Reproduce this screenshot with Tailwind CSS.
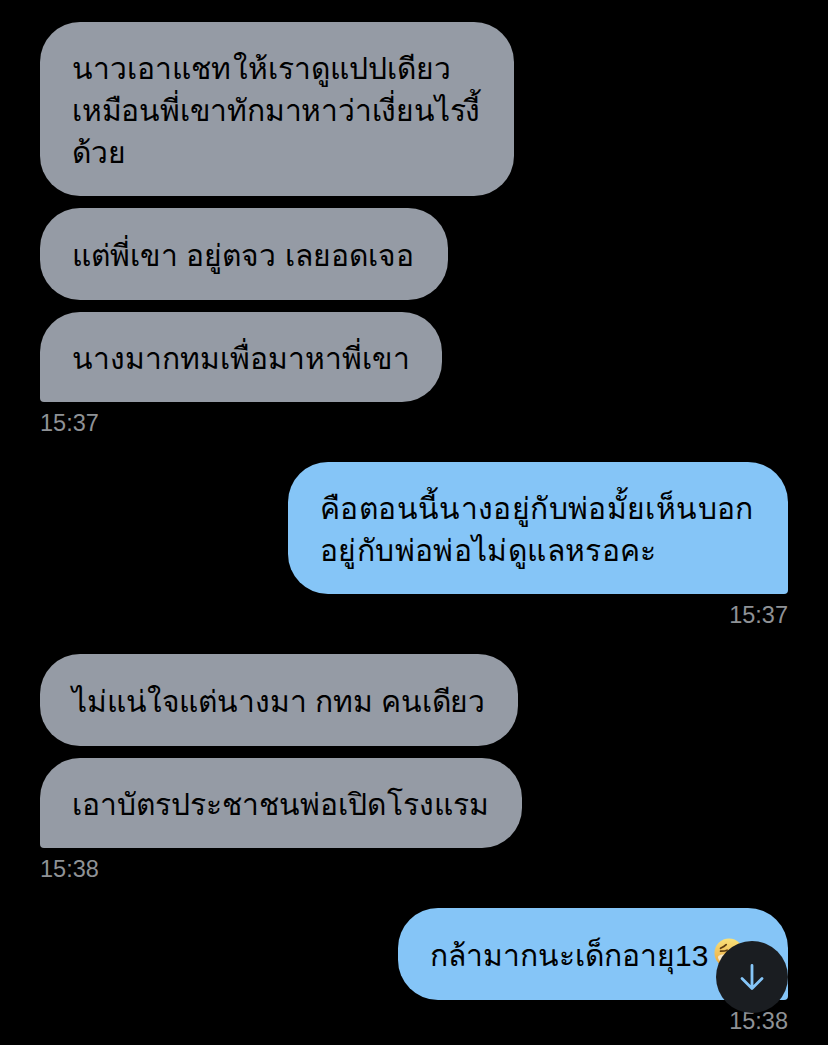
<!DOCTYPE html>
<html lang="th">
<head>
    <meta charset="UTF-8">
    <meta name="viewport" content="width=device-width, initial-scale=1.0">
    <title>Chat</title>
    <script src="https://cdn.jsdelivr.net/npm/@tailwindcss/browser@4"></script>
</head>
<body class="bg-black">
    <div class="relative h-[1045px] w-[828px] overflow-hidden bg-black px-10 pt-[22px] font-['Liberation_Sans','Noto_Sans',sans-serif] text-[30px] leading-[42px] whitespace-nowrap text-black">

        <!-- incoming 1 -->
        <div class="flex flex-col items-start gap-3">
            <div class="w-[474px] rounded-[40px] bg-[#959ba5] px-8 pt-[26px] pb-[22px]">
                นาวเอาแชท<span class="ml-[2px]">ให้เราดูแปปเดียว</span><br>
                <span class="tracking-[-0.2px]">เหมือนพี่เขาทักมาหาว่าเงี่ยนไรงี้</span><br>
                ด้วย
            </div>
            <div class="w-[408px] rounded-[40px] bg-[#959ba5] px-8 pt-[27px] pb-[23px]">แต่พี่เขา อยู่ตจว เลยอดเจอ</div>
            <div class="w-[402px] rounded-[40px] rounded-bl-[4px] bg-[#959ba5] px-8 pt-[26px] pb-[22px]">นางมากทมเพื่อมาหาพี่เขา</div>
        </div>
        <div class="mt-[7px] text-[23.5px] leading-[28px] text-[#8f9296]">15:37</div>

        <!-- outgoing 1 -->
        <div class="mt-[25px] flex flex-col items-end">
            <div class="w-[500px] rounded-[40px] rounded-br-[4px] bg-[#85c5f7] px-8 pt-[26px] pb-[22px] tracking-[0.38px]">คือตอนนี้นางอยู่กับพ่อมั้ยเห็นบอก<br>อยู่กับพ่อพ่อไม่ดูแลหรอคะ</div>
            <div class="mt-[7px] text-[23.5px] leading-[28px] text-[#8f9296]">15:37</div>
        </div>

        <!-- incoming 2 -->
        <div class="mt-[25px] flex flex-col items-start gap-3">
            <div class="w-[478px] rounded-[40px] bg-[#959ba5] px-8 pt-[27px] pb-[23px] tracking-[-0.1px]">ไม่แน่ใจแต่นางมา กทม คนเดียว</div>
            <div class="w-[482px] rounded-[40px] rounded-bl-[4px] bg-[#959ba5] px-8 pt-[26px] pb-[22px]">เอาบัตรประชาชนพ่อเปิด<span class="ml-[1px]">โรงแรม</span></div>
        </div>
        <div class="mt-[7px] text-[23.5px] leading-[28px] text-[#8f9296]">15:38</div>

        <!-- outgoing 2 -->
        <div class="mt-[25px] flex flex-col items-end">
            <div class="flex w-[390px] items-center gap-[6px] rounded-[40px] rounded-br-[4px] bg-[#85c5f7] px-8 pt-[27px] pb-[23px]">
                <span>กล้ามากนะเด็กอายุ13</span>
                <svg class="mb-[6px] h-[30px] w-[30px] shrink-0" viewBox="0 0 32 32">
                    <defs>
                        <linearGradient id="face" x1="0" y1="0" x2="0" y2="1">
                            <stop offset="0" stop-color="#f9e27a" />
                            <stop offset="1" stop-color="#e9a23b" />
                        </linearGradient>
                    </defs>
                    <circle cx="16" cy="16" r="15.5" fill="url(#face)" />
                    <path d="M7 11c2-1 4-2 6-4M7 14c3 0 5 0 7-1" fill="none" stroke="#5e3d10" stroke-width="1.8" stroke-linecap="round" />
                    <path d="M5 19c3-2 7-2 9 0s1 6-2 7-6-1-7-3-1-3 0-4z" fill="#f6e7c8" />
                </svg>
            </div>
            <div class="mt-[7px] text-[23.5px] leading-[28px] text-[#8f9296]">15:38</div>
        </div>

        <!-- scroll to bottom -->
        <button class="absolute left-[716px] top-[941px] flex h-[72px] w-[72px] items-center justify-center rounded-full bg-[#1a1d21]">
            <svg class="h-7 w-7 text-[#85c5f7]" viewBox="0 0 28 28" fill="none" stroke="currentColor" stroke-width="2.8" stroke-linecap="round" stroke-linejoin="round">
                <path d="M14 2.500v23M4 15.500 14 25.500 24 15.500" />
            </svg>
        </button>
    </div>
</body>
</html>
